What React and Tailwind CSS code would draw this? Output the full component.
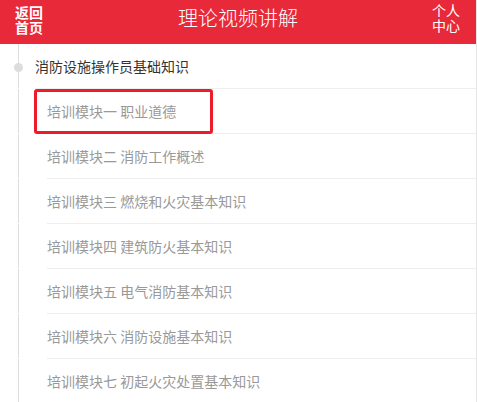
import React from "react";

const items = [
  "培训模块一 职业道德",
  "培训模块二 消防工作概述",
  "培训模块三 燃烧和火灾基本知识",
  "培训模块四 建筑防火基本知识",
  "培训模块五 电气消防基本知识",
  "培训模块六 消防设施基本知识",
  "培训模块七 初起火灾处置基本知识",
];

const font = { fontFamily: '"Noto Sans CJK SC", "Noto Sans", sans-serif' };

export default function App() {
  return (
    <div className="w-[477px] h-[402px] overflow-hidden bg-white" style={font}>
      <div className="w-[476px] h-[402px] border-r border-[#e6e6e6] box-content">
        {/* header */}
        <div className="h-[44px] bg-[#e8293a] flex items-start px-[15px] text-white">
          <div className="w-[29px] mt-[5px] text-[14px] leading-[15px] font-bold">
            <div>返回</div>
            <div>首页</div>
          </div>
          <div className="flex-1 text-center text-[20px] leading-[20px] mt-[8px] font-light">
            理论视频讲解
          </div>
          <div className="w-[29px] mt-[3px] text-[14px] leading-[15px]">
            <div>个人</div>
            <div>中心</div>
          </div>
        </div>

        {/* title row */}
        <div className="flex h-[45px]">
          <div className="w-[35px] relative shrink-0">
            <div className="absolute left-[18px] top-0 h-[44px] w-px bg-[#dddddd]" />
            <div className="absolute left-[14px] top-[19px] w-[9px] h-[9px] rounded-full bg-[#dddddd]" />
          </div>
          <div className="flex-1 border-b border-[#eeeeee] flex items-center text-[14px] text-[#333333]">
            消防设施操作员基础知识
          </div>
        </div>

        {items.map((t, i) => (
          <div key={t} className="flex h-[45px]">
            <div className="w-[47px] relative shrink-0">
              <div className="absolute left-[18px] top-0 h-[44px] w-px bg-[#dddddd]" />
            </div>
            <div className="flex-1 relative border-b border-[#eeeeee] flex items-center text-[14px] text-[#999999]">
              {i === 0 && (
                <div className="absolute left-[-13px] top-0 w-[179px] h-[45px] border-[3px] border-[#ec1c2b] rounded-[3px]" />
              )}
              {t}
            </div>
          </div>
        ))}
      </div>
    </div>
  );
}
